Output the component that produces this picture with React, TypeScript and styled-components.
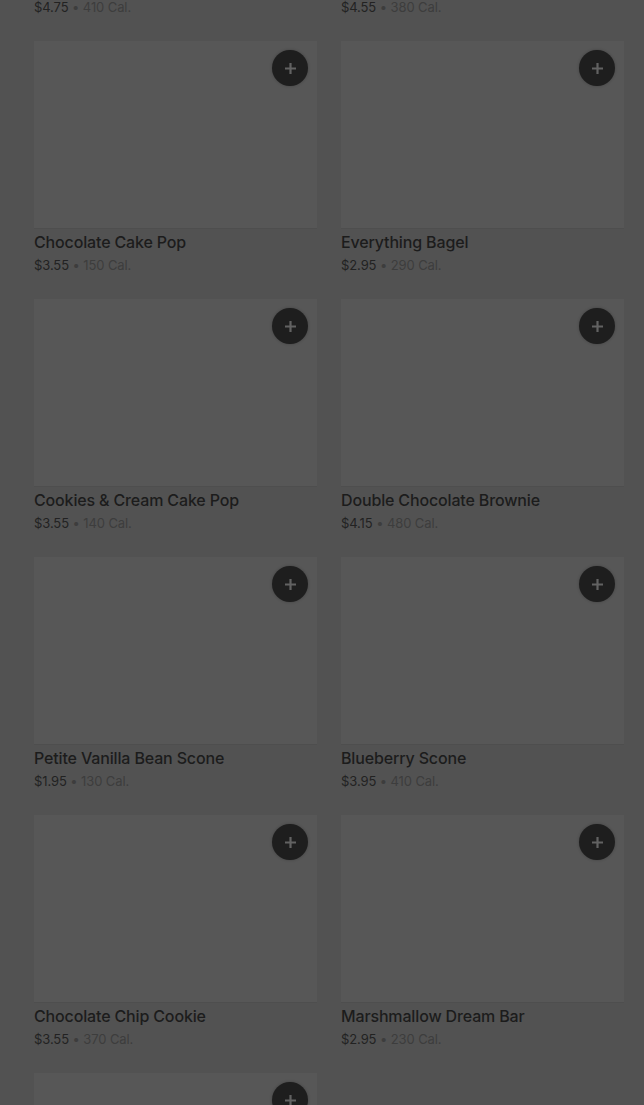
import React from "react";
import styled, { createGlobalStyle } from "styled-components";

const GlobalStyle = createGlobalStyle`
  html, body {
    margin: 0;
    padding: 0;
    background: #525252;
    overflow: hidden;
  }
  * { box-sizing: border-box; }
  body {
    font-family: Inter, "Noto Sans", Roboto, sans-serif;
  }
`;

const Page = styled.div`
  width: 644px;
  height: 1105px;
  overflow: hidden;
  background: #525252;
`;

const Grid = styled.div`
  display: grid;
  grid-template-columns: 283px 283px;
  column-gap: 24px;
  row-gap: 25px;
  padding-left: 34px;
  margin-top: -217px;
`;

const Card = styled.div`
  display: flex;
  flex-direction: column;
`;

const Thumb = styled.div`
  position: relative;
  height: 188px;
  background: #575757;
  border-bottom: 1px solid #4e4e4e;
`;

const AddButton = styled.button`
  position: absolute;
  top: 9px;
  right: 9px;
  width: 36px;
  height: 36px;
  border-radius: 50%;
  border: none;
  padding: 0;
  background: #1e1e1e;
  display: flex;
  align-items: center;
  justify-content: center;
  box-shadow: 0 0 3px rgba(0, 0, 0, 0.25);
`;

const Info = styled.div`
  display: flex;
  flex-direction: column;
  padding-top: 3px;
`;

const Title = styled.div`
  font-size: 16px;
  line-height: 20px;
  font-weight: 500;
  color: #1c1c1c;
  letter-spacing: -0.15px;
  white-space: nowrap;
`;

const Meta = styled.div`
  margin-top: 4px;
  font-size: 13px;
  line-height: 18px;
  color: #222222;
  letter-spacing: -0.1px;
  white-space: nowrap;
`;

const Cal = styled.span`
  color: #3d3d3d;
`;

type Item = { title: string; price: string; cal: number };

const items: Item[] = [
  { title: "Chocolate Croissant", price: "$4.75", cal: 410 },
  { title: "Banana Nut Bread", price: "$4.55", cal: 380 },
  { title: "Chocolate Cake Pop", price: "$3.55", cal: 150 },
  { title: "Everything Bagel", price: "$2.95", cal: 290 },
  { title: "Cookies & Cream Cake Pop", price: "$3.55", cal: 140 },
  { title: "Double Chocolate Brownie", price: "$4.15", cal: 480 },
  { title: "Petite Vanilla Bean Scone", price: "$1.95", cal: 130 },
  { title: "Blueberry Scone", price: "$3.95", cal: 410 },
  { title: "Chocolate Chip Cookie", price: "$3.55", cal: 370 },
  { title: "Marshmallow Dream Bar", price: "$2.95", cal: 230 },
  { title: "Plain Bagel", price: "$2.45", cal: 280 },
];

const PlusIcon = () => (
  <svg width="13" height="13" viewBox="0 0 13 13" aria-hidden="true">
    <path d="M6.5 1v11M1 6.5h11" stroke="#626262" strokeWidth="2.2" />
  </svg>
);

export default function App() {
  return (
    <>
      <GlobalStyle />
      <Page>
        <Grid>
          {items.map((it) => (
            <Card key={it.title}>
              <Thumb>
                <AddButton aria-label={`Add ${it.title}`}>
                  <PlusIcon />
                </AddButton>
              </Thumb>
              <Info>
                <Title>{it.title}</Title>
                <Meta>
                  {it.price} <Cal>• {it.cal} Cal.</Cal>
                </Meta>
              </Info>
            </Card>
          ))}
        </Grid>
      </Page>
    </>
  );
}
